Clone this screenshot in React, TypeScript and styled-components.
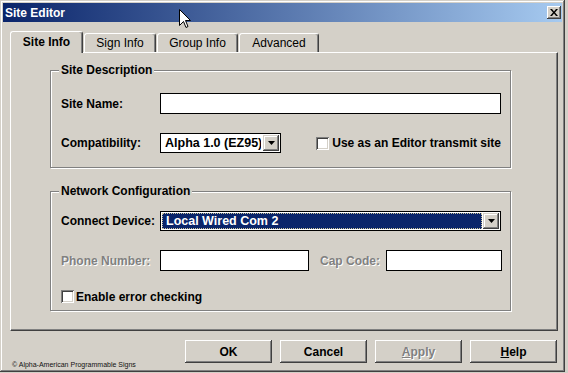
import React from "react";
import styled, { createGlobalStyle } from "styled-components";

const face = "#d4d0c8";
const shadow = "#808080";
const darkShadow = "#404040";
const highlight = "#0a246a";

const GlobalStyle = createGlobalStyle`
    html, body {
        margin: 0;
        padding: 0;
        background: ${face};
    }
    body {
        font-family: "Liberation Sans", Arial, sans-serif;
        font-size: 12px;
        color: #000;
    }
`;

const Window = styled.div`
    position: relative;
    box-sizing: border-box;
    width: 565px;
    height: 372px;
    padding: 3px;
    display: flex;
    flex-direction: column;
    background: ${face};
    box-shadow: inset -1px -1px ${darkShadow}, inset 1px 1px ${face},
        inset -2px -2px ${shadow}, inset 2px 2px #fff;
`;

const TitleBar = styled.div`
    height: 19px;
    display: flex;
    align-items: center;
    justify-content: space-between;
    padding: 0 1px 0 2px;
    background: linear-gradient(to right, #0a246a, #a6caf0);
    color: #fff;
    font-weight: bold;
    font-size: 12px;
`;

const CloseButton = styled.div`
    box-sizing: border-box;
    width: 14px;
    height: 13px;
    display: flex;
    align-items: center;
    justify-content: center;
    background: ${face};
    box-shadow: inset -1px -1px ${darkShadow}, inset 1px 1px #fff,
        inset -2px -2px ${shadow};
`;

const Body = styled.div`
    flex: 1;
    display: flex;
    flex-direction: column;
    padding: 9px 4px 0 7px;
`;

const TabRow = styled.div`
    display: flex;
    align-items: flex-end;
    height: 21px;
`;

const Tab = styled.div<{ $active?: boolean; $w: number }>`
    position: relative;
    z-index: ${p => (p.$active ? 1 : 0)};
    box-sizing: border-box;
    width: ${p => p.$w}px;
    height: ${p => (p.$active ? 22 : 19)}px;
    margin-right: 1px;
    margin-bottom: ${p => (p.$active ? -1 : 0)}px;
    padding-bottom: ${p => (p.$active ? 2 : 0)}px;
    display: flex;
    align-items: center;
    justify-content: center;
    background: ${face};
    border-top: 1px solid #fff;
    border-left: 1px solid #fff;
    border-right: 1px solid ${darkShadow};
    border-radius: 3px 3px 0 0;
    box-shadow: inset -1px 0 ${shadow};
    font-weight: ${p => (p.$active ? "bold" : "normal")};
    font-size: 12px;
`;

const Panel = styled.div`
    box-sizing: border-box;
    width: 548px;
    height: 279px;
    padding: 10px 0 0 39px;
    border-top: 1px solid #fff;
    border-left: 1px solid #fff;
    border-right: 1px solid ${darkShadow};
    border-bottom: 1px solid ${darkShadow};
    box-shadow: inset -1px -1px ${shadow};
`;

const Group = styled.fieldset<{ $pt: number; $pb: number }>`
    box-sizing: border-box;
    width: 461px;
    min-width: 0;
    margin: 0;
    padding: ${p => p.$pt}px 9px ${p => p.$pb}px 10px;
    border: 1px solid ${shadow};
    box-shadow: inset 1px 1px #fff, 1px 1px #fff;

    & + & {
        margin-top: 16px;
    }
`;

const Legend = styled.legend`
    padding: 0 2px;
    margin-left: -2px;
    background: ${face};
    font-weight: bold;
    line-height: 14px;
`;

const Rows = styled.div`
    display: flex;
    flex-direction: column;
    gap: 19px;
`;

const Row = styled.div<{ $h: number }>`
    height: ${p => p.$h}px;
    display: flex;
    align-items: center;
`;

const Label = styled.label<{ $w: number; $disabled?: boolean; $ml?: number }>`
    flex: none;
    width: ${p => p.$w}px;
    margin-left: ${p => p.$ml ?? 0}px;
    font-weight: bold;
    white-space: nowrap;
    color: ${p => (p.$disabled ? shadow : "#000")};
    text-shadow: ${p => (p.$disabled ? "1px 1px 0 #fff" : "none")};
`;

const TextField = styled.input<{ $w?: number }>`
    box-sizing: border-box;
    flex: ${p => (p.$w ? "none" : "1")};
    width: ${p => (p.$w ? `${p.$w}px` : "auto")};
    min-width: 0;
    height: 21px;
    margin: 0;
    padding: 0 3px;
    border: 1px solid #000;
    background: #fff;
    outline: none;
`;

const Select = styled.div<{ $w?: number }>`
    box-sizing: border-box;
    flex: ${p => (p.$w ? "none" : "1")};
    width: ${p => (p.$w ? `${p.$w}px` : "auto")};
    height: 20px;
    padding: 1px;
    display: flex;
    border: 1px solid #000;
    background: #fff;
`;

const SelectText = styled.div<{ $selected?: boolean }>`
    box-sizing: border-box;
    flex: 1;
    display: flex;
    align-items: center;
    padding-left: ${p => (p.$selected ? 3 : 2)}px;
    font-weight: bold;
    font-size: 12.5px;
    white-space: nowrap;
    overflow: hidden;
    background: ${p => (p.$selected ? highlight : "#fff")};
    color: ${p => (p.$selected ? "#fff" : "#000")};
    border: 1px ${p => (p.$selected ? "dotted #c9c29a" : "solid transparent")};
    margin-right: 1px;
`;

const DropButton = styled.div`
    box-sizing: border-box;
    flex: none;
    width: 16px;
    display: flex;
    align-items: center;
    justify-content: center;
    background: ${face};
    box-shadow: inset -1px -1px ${darkShadow}, inset 1px 1px ${face},
        inset -2px -2px ${shadow}, inset 2px 2px #fff;
`;

const CheckItem = styled.div<{ $gap: number; $push?: boolean }>`
    display: flex;
    align-items: center;
    gap: ${p => p.$gap}px;
    margin-left: ${p => (p.$push ? "auto" : "0")};
    font-weight: bold;
    white-space: nowrap;
`;

const CheckBox = styled.div`
    box-sizing: border-box;
    width: 13px;
    height: 13px;
    background: #fff;
    box-shadow: inset 1px 1px ${shadow}, inset -1px -1px #fff,
        inset 2px 2px ${darkShadow}, inset -2px -2px ${face};
`;

const Footer = styled.div`
    flex: 1;
    display: flex;
    justify-content: space-between;
    margin-top: 9px;
    padding: 0 1px 0 2px;
`;

const Copyright = styled.div`
    align-self: flex-end;
    font-size: 7px;
    line-height: 9px;
    color: #111;
`;

const ButtonRow = styled.div`
    display: flex;
    gap: 8px;
    align-self: flex-start;
`;

const Button = styled.button<{ $disabled?: boolean }>`
    box-sizing: border-box;
    width: 87px;
    height: 23px;
    margin: 0;
    padding: 0;
    border: none;
    background: ${face};
    font-family: inherit;
    font-size: 12px;
    font-weight: bold;
    color: ${p => (p.$disabled ? shadow : "#000")};
    text-shadow: ${p => (p.$disabled ? "1px 1px 0 #fff" : "none")};
    box-shadow: inset -1px -1px ${darkShadow}, inset 1px 1px #fff,
        inset -2px -2px ${shadow}, inset 2px 2px ${face};
`;

const Cursor = styled.svg`
    position: absolute;
    left: 179px;
    top: 9px;
`;

const DownArrow: React.FC = () => (
    <svg width="7" height="4" viewBox="0 0 7 4">
        <polygon points="0,0 7,0 3.5,4" fill="#000" />
    </svg>
);

const tabs = [
    { label: "Site Info", w: 73, active: true },
    { label: "Sign Info", w: 72 },
    { label: "Group Info", w: 81 },
    { label: "Advanced", w: 80 },
];

export default function App() {
    return (
        <>
            <GlobalStyle />
            <Window>
                <TitleBar>
                    <span>Site Editor</span>
                    <CloseButton>
                        <svg width="8" height="7" viewBox="0 0 8 7">
                            <path d="M0 0H2L4 2.5L6 0H8L5 3.5L8 7H6L4 4.5L2 7H0L3 3.5Z" fill="#000" />
                        </svg>
                    </CloseButton>
                </TitleBar>

                <Body>
                    <TabRow>
                        {tabs.map(t => (
                            <Tab key={t.label} $w={t.w} $active={t.active}>
                                {t.label}
                            </Tab>
                        ))}
                    </TabRow>

                    <Panel>
                        {/* Site Description */}
                        <Group $pt={16} $pb={14}>
                            <Legend>Site Description</Legend>
                            <Rows>
                                <Row $h={21}>
                                    <Label $w={99}>Site Name:</Label>
                                    <TextField readOnly value="" />
                                </Row>
                                <Row $h={20}>
                                    <Label $w={99}>Compatibility:</Label>
                                    <Select $w={121}>
                                        <SelectText>Alpha 1.0 (EZ95)</SelectText>
                                        <DropButton>
                                            <DownArrow />
                                        </DropButton>
                                    </Select>
                                    <CheckItem $gap={3} $push>
                                        <CheckBox />
                                        Use as an Editor transmit site
                                    </CheckItem>
                                </Row>
                            </Rows>
                        </Group>

                        {/* Network Configuration */}
                        <Group $pt={13} $pb={7}>
                            <Legend>Network Configuration</Legend>
                            <Rows>
                                <Row $h={20}>
                                    <Label $w={99}>Connect Device:</Label>
                                    <Select>
                                        <SelectText $selected>Local Wired Com 2</SelectText>
                                        <DropButton>
                                            <DownArrow />
                                        </DropButton>
                                    </Select>
                                </Row>
                                <Row $h={21}>
                                    <Label $w={99} $disabled>Phone Number:</Label>
                                    <TextField $w={149} readOnly value="" />
                                    <Label $w={66} $ml={11} $disabled>Cap Code:</Label>
                                    <TextField $w={116} readOnly value="" />
                                </Row>
                                <Row $h={13}>
                                    <CheckItem $gap={2}>
                                        <CheckBox />
                                        Enable error checking
                                    </CheckItem>
                                </Row>
                            </Rows>
                        </Group>
                    </Panel>

                    <Footer>
                        <Copyright>© Alpha-American Programmable Signs</Copyright>
                        <ButtonRow>
                            <Button>OK</Button>
                            <Button>Cancel</Button>
                            <Button $disabled><u>A</u>pply</Button>
                            <Button><u>H</u>elp</Button>
                        </ButtonRow>
                    </Footer>
                </Body>

                <Cursor width="12" height="20" viewBox="0 0 12 20">
                    <path d="M0.5 0.5V16.5L4.5 12.5L7 18.5L9 17.5L6.5 11.5H11.5Z" fill="#fff" stroke="#000" strokeWidth="1" />
                </Cursor>
            </Window>
        </>
    );
}
